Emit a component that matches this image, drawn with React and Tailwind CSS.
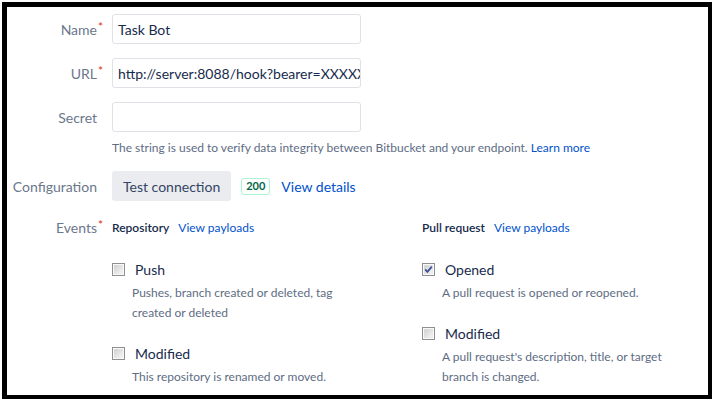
import React from "react";

const font = { fontFamily: 'Lato, "Liberation Sans", sans-serif' };

function Req() {
  return <span className="absolute -right-[6px] -top-[3px] text-[12px] text-[#de350b]">*</span>;
}

function Label({ children, req, top }) {
  return (
    <div className={top ? "w-[90px] shrink-0 flex justify-end" : "w-[90px] shrink-0 flex justify-end pt-[2px]"}>
      <span className="relative text-[14px] text-[#6b778c] leading-[20px] whitespace-nowrap">
        {children}
        {req && <Req />}
      </span>
    </div>
  );
}

function Box({ checked }) {
  return (
    <svg width="13" height="13" viewBox="0 0 13 13" className="shrink-0">
      <defs>
        <linearGradient id={checked ? "g1" : "g2"} x1="0" y1="0" x2="1" y2="1">
          <stop offset="0" stopColor="#cfcfcf" />
          <stop offset="1" stopColor="#f7f7f7" />
        </linearGradient>
      </defs>
      <rect x="0.5" y="0.5" width="12" height="12" fill="#fff" stroke="#8f8f8f" />
      <rect x="2" y="2" width="9" height="9" fill={`url(#${checked ? "g1" : "g2"})`} stroke="#e4e4e4" strokeWidth="0.5" />
      {checked && (
        <path d="M3.2 6.4 L5.4 8.8 L9.8 3.6" fill="none" stroke="#3c5296" strokeWidth="1.8" />
      )}
    </svg>
  );
}

function Item({ checked, title, lines, className = "" }) {
  return (
    <div className={className}>
      <div className="flex items-center h-[20px]">
        <Box checked={checked} />
        <span className="ml-[10px] text-[14px] text-[#172b4d]">{title}</span>
      </div>
      <div className="mt-[4px] pl-[20px] text-[12px] leading-[20px] text-[#5e6c84]">
        {lines.map((l) => (
          <div key={l}>{l}</div>
        ))}
      </div>
    </div>
  );
}

export default function App() {
  return (
    <div className="w-[714px] h-[401px] bg-white p-[2px] overflow-hidden" style={font}>
      <div className="h-full border-black border-l-[5px] border-t-[5px] border-r-[4px] border-b-[4px] overflow-hidden">
        <div className="pt-[7px]">
          <div className="flex items-center gap-[15px]">
            <Label req>Name</Label>
            <div className="w-[249px] h-[30px] border border-[#dfe1e6] rounded-[3px] px-[5px] flex items-center text-[14px] text-[#172b4d]">
              Task Bot
            </div>
          </div>
          <div className="flex items-center gap-[15px] mt-[14px]">
            <Label req>URL</Label>
            <div className="w-[249px] h-[30px] border border-[#dfe1e6] rounded-[3px] px-[5px] flex items-center text-[14px] text-[#172b4d] overflow-hidden whitespace-nowrap">
              http://server:8088/hook?bearer=XXXXX
            </div>
          </div>
          <div className="flex items-center gap-[15px] mt-[14px]">
            <Label>Secret</Label>
            <div className="w-[249px] h-[30px] border border-[#dfe1e6] rounded-[3px]" />
          </div>
          <div className="ml-[105px] mt-[8px] text-[12px] leading-[16px] text-[#5e6c84] whitespace-nowrap">
            The string is used to verify data integrity between Bitbucket and your endpoint.{" "}
            <span className="text-[#0052cc]">Learn more</span>
          </div>
          <div className="flex items-center gap-[15px] mt-[15px]">
            <Label>Configuration</Label>
            <div className="h-[30px] px-[11px] rounded-[3px] bg-[#ebecf0] flex items-center text-[14px] text-[#344563]">
              Test connection
            </div>
            <span className="ml-[-5px] h-[17px] px-[4px] border border-[#abf5d1] rounded-[3px] flex items-center text-[11px] font-bold text-[#006644]">
              200
            </span>
            <span className="ml-[-4px] text-[14px] text-[#0052cc]">View details</span>
          </div>
          <div className="flex items-start gap-[15px] mt-[17px]">
            <Label req top>Events</Label>
            <div className="flex">
              <div className="w-[310px]">
                <div className="h-[20px] flex items-center text-[12px]">
                  <span className="font-semibold text-[#172b4d]">Repository</span>
                  <span className="ml-[9px] text-[#0052cc]">View payloads</span>
                </div>
                <Item
                  className="mt-[21px]"
                  title="Push"
                  lines={["Pushes, branch created or deleted, tag", "created or deleted"]}
                />
                <Item
                  className="mt-[20px]"
                  title="Modified"
                  lines={["This repository is renamed or moved."]}
                />
              </div>
              <div className="w-[280px]">
                <div className="h-[20px] flex items-center text-[12px]">
                  <span className="font-semibold text-[#172b4d]">Pull request</span>
                  <span className="ml-[9px] text-[#0052cc]">View payloads</span>
                </div>
                <Item
                  className="mt-[21px]"
                  checked
                  title="Opened"
                  lines={["A pull request is opened or reopened."]}
                />
                <Item
                  className="mt-[20px]"
                  title="Modified"
                  lines={["A pull request's description, title, or target", "branch is changed."]}
                />
              </div>
            </div>
          </div>
        </div>
      </div>
    </div>
  );
}
